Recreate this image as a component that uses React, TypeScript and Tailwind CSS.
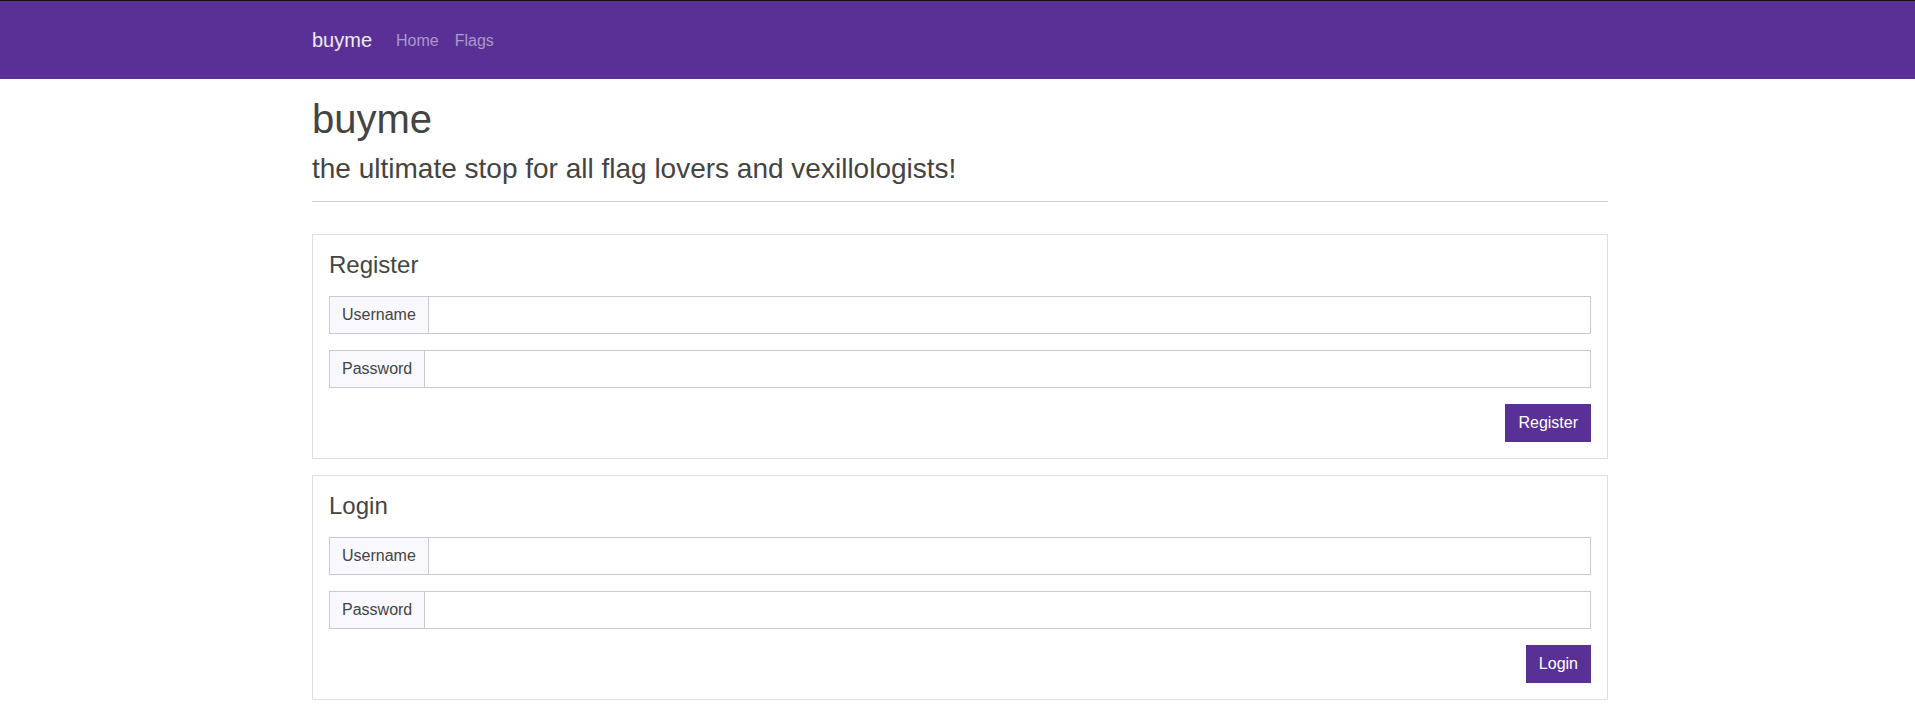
import { useId } from "react";

const container = "mx-auto w-full max-w-[1296px]";

function Field({ label, name, type }: { label: string; name: string; type: string }) {
  const id = useId();
  return (
    <div className="flex h-[38px] items-stretch">
      <label
        htmlFor={id}
        className="flex items-center border border-[#cbc8d0] bg-[#f9f8fc] px-3"
      >
        {label}
      </label>
      <input
        id={id}
        name={name}
        type={type}
        className="-ml-px min-w-0 flex-1 border border-[#cbc8d0] bg-white px-3 outline-none focus:border-[#593196]"
      />
    </div>
  );
}

function AccountForm({ title }: { title: string }) {
  return (
    <section className="border border-[#dfdfdf] p-4">
      <h2 className="mb-[18px] text-[24px] leading-[27px]">{title}</h2>
      <form className="flex flex-col gap-4" onSubmit={(e) => e.preventDefault()}>
        <Field label="Username" name="username" type="text" />
        <Field label="Password" name="password" type="password" />
        <button
          type="submit"
          className="h-[38px] self-end border border-[#593196] bg-[#593196] px-3 text-white"
        >
          {title}
        </button>
      </form>
    </section>
  );
}

export default function App() {
  return (
    <div className="bg-white font-['Liberation_Sans',Arial,sans-serif] text-base leading-6 text-[#444444]">
      <header className="border-t border-[#121212] bg-[#593196] pl-[5px]">
        <nav className={`${container} flex h-[78px] items-center`}>
          <a href="#" className="mr-4 text-[20px] leading-[30px] text-white/90">
            buyme
          </a>
          <div className="flex pt-0.5">
            <a href="#" className="px-2 text-white/50">
              Home
            </a>
            <a href="#flags" className="px-2 text-white/50">
              Flags
            </a>
          </div>
        </nav>
      </header>
      <main className="pt-4 pb-6 pl-[5px]">
        <div className={container}>
          <h1 className="mb-2 text-[40px] leading-[48px]">buyme</h1>
          <p className="text-[28px] leading-9">
            the ultimate stop for all flag lovers and vexillologists!
          </p>
          <hr className="mt-[14px] mb-8 border-[#d0d0d0]" />
          <div className="flex flex-col gap-4">
            <AccountForm title="Register" />
            <AccountForm title="Login" />
          </div>
        </div>
      </main>
    </div>
  );
}
